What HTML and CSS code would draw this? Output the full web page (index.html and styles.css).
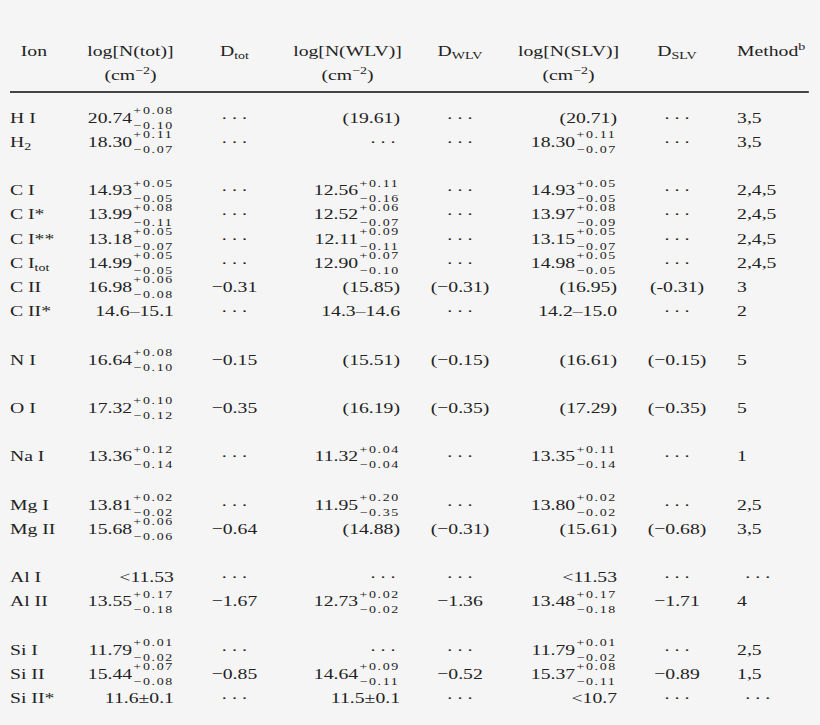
FILE: index.html
```html
<!DOCTYPE html>
<html>
<head>
<meta charset="utf-8">
<link rel="stylesheet" href="styles.css">
</head>
<body>
<div class="sheet">
  <div class="table">
    <div class="cols head">
      <div class="h">Ion</div>
      <div class="h">log[N(tot)]<br>(cm<span class="hs">−2</span>)</div>
      <div class="h">D<span class="hb">tot</span></div>
      <div class="h">log[N(WLV)]<br>(cm<span class="hs">−2</span>)</div>
      <div class="h">D<span class="hb">WLV</span></div>
      <div class="h">log[N(SLV)]<br>(cm<span class="hs">−2</span>)</div>
      <div class="h">D<span class="hb">SLV</span></div>
      <div class="h m">Method<span class="hs">b</span></div>
    </div>
    <div class="rule"></div>
    <div class="body">
      <div class="group">
        <div class="cols row"><div>H I</div><div>20.74<span class="ss"><span>+0.08</span><span>−0.10</span></span></div><div><span class="d">···</span></div><div>(19.61)</div><div><span class="d">···</span></div><div>(20.71)</div><div><span class="d">···</span></div><div>3,5</div></div>
        <div class="cols row"><div>H<span class="is">2</span></div><div>18.30<span class="ss"><span>+0.11</span><span>−0.07</span></span></div><div><span class="d">···</span></div><div><span class="d">···</span></div><div><span class="d">···</span></div><div>18.30<span class="ss"><span>+0.11</span><span>−0.07</span></span></div><div><span class="d">···</span></div><div>3,5</div></div>
      </div>
      <div class="group">
        <div class="cols row"><div>C I</div><div>14.93<span class="ss"><span>+0.05</span><span>−0.05</span></span></div><div><span class="d">···</span></div><div>12.56<span class="ss"><span>+0.11</span><span>−0.16</span></span></div><div><span class="d">···</span></div><div>14.93<span class="ss"><span>+0.05</span><span>−0.05</span></span></div><div><span class="d">···</span></div><div>2,4,5</div></div>
        <div class="cols row"><div>C I*</div><div>13.99<span class="ss"><span>+0.08</span><span>−0.11</span></span></div><div><span class="d">···</span></div><div>12.52<span class="ss"><span>+0.06</span><span>−0.07</span></span></div><div><span class="d">···</span></div><div>13.97<span class="ss"><span>+0.08</span><span>−0.09</span></span></div><div><span class="d">···</span></div><div>2,4,5</div></div>
        <div class="cols row"><div>C I**</div><div>13.18<span class="ss"><span>+0.05</span><span>−0.07</span></span></div><div><span class="d">···</span></div><div>12.11<span class="ss"><span>+0.09</span><span>−0.11</span></span></div><div><span class="d">···</span></div><div>13.15<span class="ss"><span>+0.05</span><span>−0.07</span></span></div><div><span class="d">···</span></div><div>2,4,5</div></div>
        <div class="cols row"><div>C I<span class="is">tot</span></div><div>14.99<span class="ss"><span>+0.05</span><span>−0.05</span></span></div><div><span class="d">···</span></div><div>12.90<span class="ss"><span>+0.07</span><span>−0.10</span></span></div><div><span class="d">···</span></div><div>14.98<span class="ss"><span>+0.05</span><span>−0.05</span></span></div><div><span class="d">···</span></div><div>2,4,5</div></div>
        <div class="cols row"><div>C II</div><div>16.98<span class="ss"><span>+0.06</span><span>−0.08</span></span></div><div>−0.31</div><div>(15.85)</div><div>(−0.31)</div><div>(16.95)</div><div>(-0.31)</div><div>3</div></div>
        <div class="cols row"><div>C II*</div><div>14.6–15.1</div><div><span class="d">···</span></div><div>14.3–14.6</div><div><span class="d">···</span></div><div>14.2–15.0</div><div><span class="d">···</span></div><div>2</div></div>
      </div>
      <div class="group">
        <div class="cols row"><div>N I</div><div>16.64<span class="ss"><span>+0.08</span><span>−0.10</span></span></div><div>−0.15</div><div>(15.51)</div><div>(−0.15)</div><div>(16.61)</div><div>(−0.15)</div><div>5</div></div>
      </div>
      <div class="group">
        <div class="cols row"><div>O I</div><div>17.32<span class="ss"><span>+0.10</span><span>−0.12</span></span></div><div>−0.35</div><div>(16.19)</div><div>(−0.35)</div><div>(17.29)</div><div>(−0.35)</div><div>5</div></div>
      </div>
      <div class="group">
        <div class="cols row"><div>Na I</div><div>13.36<span class="ss"><span>+0.12</span><span>−0.14</span></span></div><div><span class="d">···</span></div><div>11.32<span class="ss"><span>+0.04</span><span>−0.04</span></span></div><div><span class="d">···</span></div><div>13.35<span class="ss"><span>+0.11</span><span>−0.14</span></span></div><div><span class="d">···</span></div><div>1</div></div>
      </div>
      <div class="group">
        <div class="cols row"><div>Mg I</div><div>13.81<span class="ss"><span>+0.02</span><span>−0.02</span></span></div><div><span class="d">···</span></div><div>11.95<span class="ss"><span>+0.20</span><span>−0.35</span></span></div><div><span class="d">···</span></div><div>13.80<span class="ss"><span>+0.02</span><span>−0.02</span></span></div><div><span class="d">···</span></div><div>2,5</div></div>
        <div class="cols row"><div>Mg II</div><div>15.68<span class="ss"><span>+0.06</span><span>−0.06</span></span></div><div>−0.64</div><div>(14.88)</div><div>(−0.31)</div><div>(15.61)</div><div>(−0.68)</div><div>3,5</div></div>
      </div>
      <div class="group">
        <div class="cols row"><div>Al I</div><div>&lt;11.53</div><div><span class="d">···</span></div><div><span class="d">···</span></div><div><span class="d">···</span></div><div>&lt;11.53</div><div><span class="d">···</span></div><div><span class="d md">···</span></div></div>
        <div class="cols row"><div>Al II</div><div>13.55<span class="ss"><span>+0.17</span><span>−0.18</span></span></div><div>−1.67</div><div>12.73<span class="ss"><span>+0.02</span><span>−0.02</span></span></div><div>−1.36</div><div>13.48<span class="ss"><span>+0.17</span><span>−0.18</span></span></div><div>−1.71</div><div>4</div></div>
      </div>
      <div class="group">
        <div class="cols row"><div>Si I</div><div>11.79<span class="ss"><span>+0.01</span><span>−0.02</span></span></div><div><span class="d">···</span></div><div><span class="d">···</span></div><div><span class="d">···</span></div><div>11.79<span class="ss"><span>+0.01</span><span>−0.02</span></span></div><div><span class="d">···</span></div><div>2,5</div></div>
        <div class="cols row"><div>Si II</div><div>15.44<span class="ss"><span>+0.07</span><span>−0.08</span></span></div><div>−0.85</div><div>14.64<span class="ss"><span>+0.09</span><span>−0.11</span></span></div><div>−0.52</div><div>15.37<span class="ss"><span>+0.08</span><span>−0.11</span></span></div><div>−0.89</div><div>1,5</div></div>
        <div class="cols row"><div>Si II*</div><div>11.6±0.1</div><div><span class="d">···</span></div><div>11.5±0.1</div><div><span class="d">···</span></div><div>&lt;10.7</div><div><span class="d">···</span></div><div><span class="d md">···</span></div></div>
      </div>
    </div>
  </div>
</div>
</body>
</html>
```
FILE: styles.css
```css
html, body {
  margin: 0;
  background: #f5f5f5;
}

body {
  color: #222;
  font-family: "Liberation Serif", "Times New Roman", serif;
  font-size: 15.5px;
}

.sheet {
  padding: 38.7px 0 0 10px;
}

.table {
  width: 631.5px;
  transform: scaleX(1.27);
  transform-origin: 0 0;
}

.cols {
  display: grid;
  grid-template-columns: 37.6px 68.5px 49.3px 82.7px 48.5px 76.4px 48.5px 59px;
  column-gap: 23px;
  line-height: 24.2px;
  white-space: nowrap;
}

.head .h {
  justify-self: center;
  text-align: center;
}

.head .h.m {
  justify-self: start;
  text-align: left;
}

.hs {
  font-size: 11px;
  line-height: 0;
  vertical-align: 6.5px;
}

.hb {
  font-size: 11px;
  line-height: 0;
  vertical-align: -3px;
}

.rule {
  width: 629px;
  height: 2px;
  background: #444;
  margin: 3.9px 0 12.7px;
}

.body {
  display: flex;
  flex-direction: column;
  gap: 24.2px;
}

.row {
  height: 24.2px;
}

.row > div:nth-child(1),
.row > div:nth-child(8) {
  text-align: left;
}

.row > div:nth-child(2),
.row > div:nth-child(4),
.row > div:nth-child(6) {
  text-align: right;
}

.row > div:nth-child(3),
.row > div:nth-child(5),
.row > div:nth-child(7) {
  text-align: center;
}

.is {
  font-size: 11px;
  line-height: 0;
  vertical-align: -3px;
}

.ss {
  display: inline-flex;
  flex-direction: column;
  align-items: flex-start;
  row-gap: 6px;
  vertical-align: 8.5px;
  margin: -4px 0 -4px 1px;
  font-size: 11px;
  letter-spacing: 1.3px;
  line-height: 9px;
  text-align: left;
}

.ss span {
  display: block;
  height: 9px;
}

.d {
  letter-spacing: 2.8px;
  padding-left: 2.8px;
}

.d.md {
  margin-left: 3px;
}
```
